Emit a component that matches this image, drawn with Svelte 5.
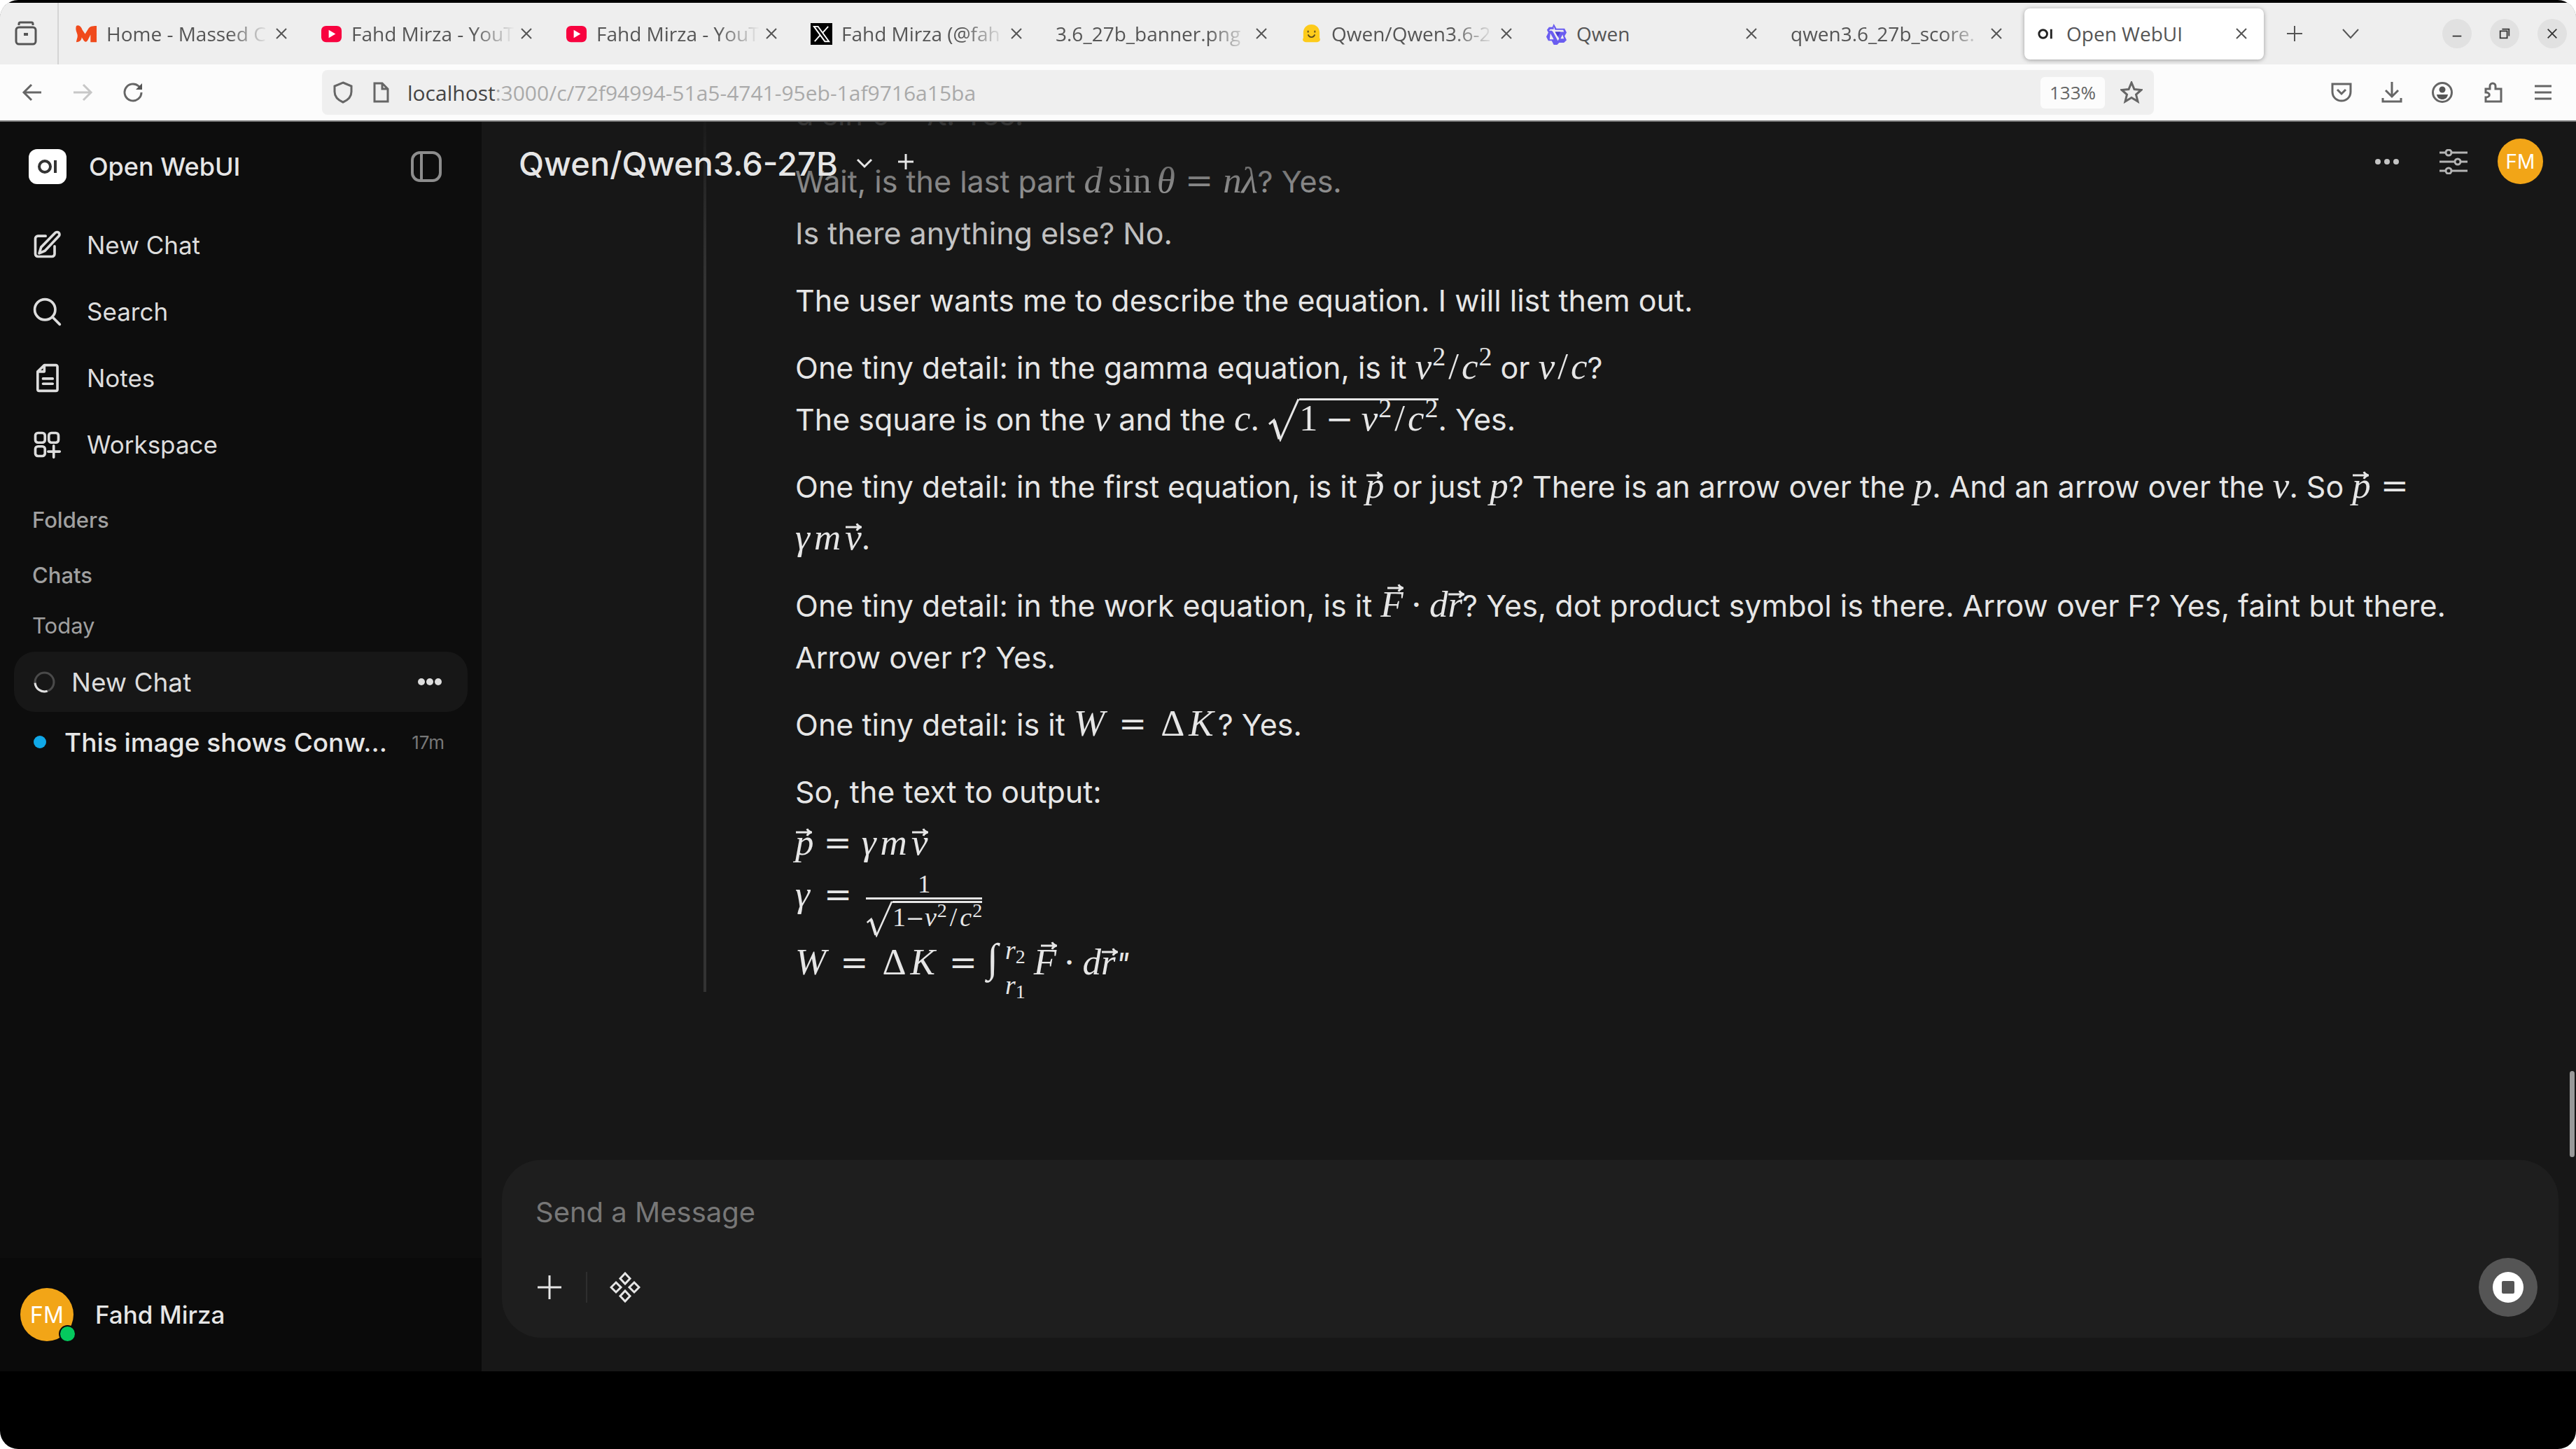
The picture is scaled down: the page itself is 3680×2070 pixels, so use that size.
<script lang="ts">
  type Tab = { title: string; icon: string; active?: boolean };

  const tabs: Tab[] = [
    { title: 'Home - Massed C', icon: 'massed' },
    { title: 'Fahd Mirza - YouT', icon: 'youtube' },
    { title: 'Fahd Mirza - YouT', icon: 'youtube' },
    { title: 'Fahd Mirza (@fah', icon: 'x' },
    { title: '3.6_27b_banner.png', icon: '' },
    { title: 'Qwen/Qwen3.6-2', icon: 'hugging' },
    { title: 'Qwen', icon: 'qwen' },
    { title: 'qwen3.6_27b_score.', icon: '' },
    { title: 'Open WebUI', icon: 'oi', active: true },
  ];

  let message = $state('');
</script>

{#snippet favicon(name: string)}
  {#if name === 'massed'}
    <svg class="favicon" viewBox="0 0 32 32"><path fill="#f04a1c" d="M1 4c4-2 7 1 9 6l4 6 5-8c2-3 5-4 12-4v24h-9V17l-4 8c-2 4-5 3-7-1l-2-3c0 5-4 7-8 7 1-6 3-8 1-13C0 10 0 7 1 4z" /></svg>
  {:else if name === 'youtube'}
    <svg class="favicon" viewBox="0 0 32 32"><rect x="1" y="4" width="30" height="24" rx="7" fill="#f8033f" /><path fill="#fff" d="M12 10l10 6-10 6z" /></svg>
  {:else if name === 'x'}
    <svg class="favicon" viewBox="0 0 32 32"><rect width="32" height="32" fill="#000" /><path fill="none" stroke="#fff" stroke-width="2" d="M5 5h6l16 22h-6zM26 5L17.500 14.500M14 18L6 27" /></svg>
  {:else if name === 'hugging'}
    <svg class="favicon" viewBox="0 0 32 32"><path fill="#fdcb1b" d="M16 2c7 0 12 5 12 12v8c2 3 0 6-4 6H8c-4 0-6-3-4-6v-8C4 7 9 2 16 2z" /><path fill="none" stroke="#5d4a1c" stroke-width="2" d="M11 11v3M21 11v3M11 17c2 5 8 5 10 0" /></svg>
  {:else if name === 'qwen'}
    <svg class="favicon" viewBox="0 0 32 32"><path fill="#6a5df0" d="M12 1l4 7h12l3 6-3 5 3 6-4 4h-7l-3 3h-5l-3-6H4l-3-6 3-6-2-4 3-4h5z" /><path fill="#eee" d="M12 5l2 5h12l1 3H14l6 10-2 3-7-13-2-2H5l2-2h5zM25 17l2 6h-5zM7 15l5 9H6z" /><path fill="#4b3fd0" d="M14 13h8l-4 7z" /></svg>
  {:else if name === 'oi'}
    <svg class="favicon" viewBox="0 0 32 32"><circle cx="11" cy="16" r="6" fill="none" stroke="#222" stroke-width="3" /><path stroke="#222" stroke-width="3" d="M23 9v14" /></svg>
  {/if}
{/snippet}

{#snippet cross()}
  <svg class="cross" viewBox="0 0 20 20"><path d="M3 3l14 14M17 3L3 17" /></svg>
{/snippet}

{#snippet vec(symbol: string)}<span class="vec">{symbol}<svg viewBox="0 0 24 12"><path d="M1 6h21M17 1c1 3 3 4 6 5-3 1-5 2-6 5" /></svg></span>{/snippet}

{#snippet root()}<span class="root"><svg class="radical" viewBox="0 0 45 62" preserveAspectRatio="none"><path d="M2 37l7-6 9 28L44 1" /><path d="M9 32l8 26" stroke-width="5" /></svg><span class="radicand"><b>1</b><b class="bin">−</b>v<sup>2</sup><b class="slash">/</b>c<sup>2</sup></span></span>{/snippet}

<div class="screen">
  <header class="browser">
    <div class="tabstrip">
      <button class="view" aria-label="Firefox View">
        <svg viewBox="0 0 32 36"><path d="M6 6V4a2 2 0 0 1 2-2h16a2 2 0 0 1 2 2v2" /><rect x="2" y="9" width="28" height="24" rx="4" /><path d="M13 19h6" stroke-width="4" /></svg>
      </button>
      <div class="tabs" role="tablist">
        {#each tabs as tab}
          <div class="tab" class:active={tab.active} role="tab" aria-selected={!!tab.active} tabindex="0">
            {@render favicon(tab.icon)}
            <span class="title" class:fade={!tab.active && tab.title !== 'Qwen'}>{tab.title}</span>
            <button aria-label="Close tab">{@render cross()}</button>
          </div>
        {/each}
      </div>
      <button class="strip-btn" aria-label="New tab"><svg viewBox="0 0 24 24"><path d="M12 1v22M1 12h22" /></svg></button>
      <button class="strip-btn" aria-label="List all tabs"><svg viewBox="0 0 24 24"><path d="M1 6l11 12L23 6" /></svg></button>
      <div class="window-btns">
        <button aria-label="Minimize"><svg viewBox="0 0 20 20"><path d="M3 14h14" /></svg></button>
        <button aria-label="Restore"><svg viewBox="0 0 20 20"><path d="M3 6h11v11H3zM6 3h11v11" /></svg></button>
        <button aria-label="Close">{@render cross()}</button>
      </div>
    </div>

    <div class="toolbar">
      <div class="nav">
        <button aria-label="Back"><svg viewBox="0 0 32 32"><path d="M29 16H4M15 5L4 16l11 11" /></svg></button>
        <button aria-label="Forward" disabled><svg viewBox="0 0 32 32"><path d="M3 16h25M17 5l11 11-11 11" /></svg></button>
        <button aria-label="Reload"><svg viewBox="0 0 32 32"><path d="M28 16a12 12 0 1 1-4-9l4 4" /><path d="M29 3v9h-9z" fill="#555" stroke="none" /></svg></button>
      </div>
      <div class="urlbar">
        <svg viewBox="0 0 32 32"><path d="M16 2l12 5v8c0 7-5 12-12 15C9 27 4 22 4 15V7z" /></svg>
        <svg viewBox="0 0 32 32"><path d="M7 3h11l8 8v18H7zM18 3v8h8" /></svg>
        <span class="url">localhost<span>:3000/c/72f94994-51a5-4741-95eb-1af9716a15ba</span></span>
        <button class="zoom">133%</button>
        <button class="star" aria-label="Bookmark this page"><svg viewBox="0 0 32 32"><path d="M16 2l4 9.500 10 1-7.500 6.500L25 29l-9-5.500L7 29l2.500-10L2 12.500l10-1z" /></svg></button>
      </div>
      <div class="extras">
        <button aria-label="Save to Pocket"><svg viewBox="0 0 32 32"><path d="M3 4h26v11c0 8-6 13-13 13S3 23 3 15zM10 12l6 6 6-6" /></svg></button>
        <button aria-label="Downloads"><svg viewBox="0 0 32 32"><path d="M16 1v20M7 13l9 9 9-9M3 24v5h26v-5" /></svg></button>
        <button aria-label="Account"><svg viewBox="0 0 32 32"><circle cx="16" cy="16" r="13.500" /><circle cx="16" cy="12" r="4.500" fill="#555" stroke="none" /><path d="M8 19h16c-1 5-4 7-8 7s-7-2-8-7z" fill="#555" stroke="none" /></svg></button>
        <button aria-label="Extensions"><svg viewBox="0 0 32 32"><path d="M6 11h6V7a4 4 0 0 1 8 0v4h8v18H6v-6c7 0 7-7 0-7z" /></svg></button>
        <button aria-label="Menu"><svg viewBox="0 0 32 32"><path d="M4 7h24M4 16h24M4 25h24" /></svg></button>
      </div>
    </div>
  </header>

  <div class="app">
    <aside>
      <div class="brand">
        <span class="logo"><svg viewBox="0 0 52 50"><circle cx="22" cy="25" r="8" /><path d="M37 16v18" /></svg></span>
        <span>Open WebUI</span>
        <button aria-label="Toggle sidebar">
          <svg viewBox="0 0 44 44"><rect x="2" y="2" width="40" height="40" rx="11" /><path d="M15 2v40" /></svg>
        </button>
      </div>

      <nav>
        <a href="#new">
          <svg viewBox="0 0 24 24"><path d="M11 5H5a2 2 0 0 0-2 2v12a2 2 0 0 0 2 2h11a2 2 0 0 0 2-2v-6" /><path d="M18.500 2.500a1.900 1.900 0 0 1 2.800 2.600L10.500 16.500 6 18.500l1.500-4.800z" /></svg>
          New Chat
        </a>
        <a href="#search">
          <svg viewBox="0 0 24 24"><circle cx="10.500" cy="10.500" r="8" /><path d="M16.500 16.500L22 22" /></svg>
          Search
        </a>
        <a href="#notes">
          <svg viewBox="0 0 24 24"><path d="M10 2h9a1.200 1.200 0 0 1 1.200 1.200v17.600A1.200 1.200 0 0 1 19 22H6a1.200 1.200 0 0 1-1.200-1.200V7zM10 2v5H4.800M9 12.500h7.500M9 16.500h7.500" /></svg>
          Notes
        </a>
        <a href="#workspace">
          <svg viewBox="0 0 24 24"><rect x="3" y="3" width="7.500" height="7.500" rx="2" /><rect x="13.500" y="3" width="7.500" height="7.500" rx="2" /><rect x="3" y="13.500" width="7.500" height="7.500" rx="2" /><path d="M17.300 13v9M13 17.500h9" /></svg>
          Workspace
        </a>
      </nav>

      <h2>Folders</h2>
      <h2>Chats</h2>
      <h3>Today</h3>

      <div class="chats">
        <div class="chat selected">
          <svg class="spinner" viewBox="0 0 30 30"><circle cx="15" cy="15" r="13" stroke="#4a4a4a" /><path d="M2 16a13 13 0 0 0 17 11.300" stroke="#e0e0e0" /></svg>
          <a href="#chat-1">New Chat</a>
          <button aria-label="Chat menu"><svg viewBox="0 0 36 12"><circle cx="6" cy="6" r="5" /><circle cx="18" cy="6" r="5" /><circle cx="30" cy="6" r="5" /></svg></button>
        </div>
        <div class="chat unread">
          <i></i>
          <a href="#chat-2">This image shows Conw...</a>
          <time>17m</time>
        </div>
      </div>

      <div class="user">
        <span class="avatar large">FM<i></i></span>
        <span>Fahd Mirza</span>
      </div>
    </aside>

    <main>
      <div class="topbar">
        <button class="model">
          Qwen/Qwen3.6-27B
          <svg viewBox="0 0 24 24"><path d="M2 7l10 10L22 7" /></svg>
        </button>
        <button class="add" aria-label="Add model"><svg viewBox="0 0 24 24"><path d="M12 1v22M1 12h22" /></svg></button>
        <button class="more" aria-label="More"><svg viewBox="0 0 36 10"><circle cx="5" cy="5" r="4" /><circle cx="18" cy="5" r="4" /><circle cx="31" cy="5" r="4" /></svg></button>
        <button class="controls" aria-label="Controls"><svg viewBox="0 0 40 36"><path d="M0 5h9M17 5h23M0 18h22M30 18h10M0 31h9M17 31h23" /><circle cx="13" cy="5" r="4" /><circle cx="26" cy="18" r="4" /><circle cx="13" cy="31" r="4" /></svg></button>
        <button class="avatar">FM</button>
      </div>

      <div class="messages">
        <blockquote>
          <p>d sin θ = λ: Yes.</p>
          <p>
            Wait, is the last part <span class="math">d<b class="fn">sin</b>θ<b class="rel">=</b>nλ</span>? Yes.<br />
            Is there anything else? No.
          </p>
          <p>The user wants me to describe the equation. I will list them out.</p>
          <p>
            One tiny detail: in the gamma equation, is it <span class="math">v<sup>2</sup><b class="slash">/</b>c<sup>2</sup></span> or <span class="math">v<b class="slash">/</b>c</span>?<br />
            The square is on the <span class="math">v</span> and the <span class="math">c</span>. <span class="math">{@render root()}</span>. Yes.
          </p>
          <p>
            One tiny detail: in the first equation, is it <span class="math">{@render vec('p')}</span> or just <span class="math">p</span>? There is an arrow over the <span class="math">p</span>. And an arrow over the <span class="math">v</span>. So <span class="math">{@render vec('p')}<b class="rel">=</b></span><br />
            <span class="math">γ<i>m</i>{@render vec('v')}</span>.
          </p>
          <p>
            One tiny detail: in the work equation, is it <span class="math cap">{@render vec('F')}<b class="bin">·</b></span><span class="math">d{@render vec('r')}</span>? Yes, dot product symbol is there. Arrow over F? Yes, faint but there.<br />
            Arrow over r? Yes.
          </p>
          <p>One tiny detail: is it <span class="math">W<b class="rel wide">=</b><b>Δ</b><i>K</i></span>? Yes.</p>
          <p>
            So, the text to output:<br />
            <span class="math">{@render vec('p')}<b class="rel">=</b>γ<i>m</i>{@render vec('v')}</span><br />
            <span class="math">γ<b class="rel wide">=</b><span class="frac"><b class="num">1</b><span class="den">{@render root()}</span></span></span><br />
            <span class="math">W<b class="rel wide">=</b><b>Δ</b><i>K</i><b class="rel">=</b><b class="int">∫</b><span class="limits"><span>r<sub>2</sub></span><span>r<sub>1</sub></span></span><span class="cap">{@render vec('F')}</span><b class="bin">·</b>d{@render vec('r')}</span><em>"</em>
          </p>
        </blockquote>
        <div class="thumb"></div>
      </div>

      <form class="composer">
        <input bind:value={message} placeholder="Send a Message" aria-label="Send a Message" />
        <div class="actions">
          <button type="button" aria-label="Attach"><svg viewBox="0 0 36 36"><path d="M18 1v34M1 18h34" /></svg></button>
          <hr />
          <button type="button" aria-label="Integrations"><svg viewBox="0 0 44 44"><path d="M22 2l7 7.500-7 7.500-7-7.500zM9 15l7 7-7 7-7-7zM35 15l7 7-7 7-7-7zM22 27l7 7.500-7 7.500-7-7.500z" /></svg></button>
          <button type="button" class="stop" aria-label="Stop"><svg viewBox="0 0 84 84"><circle cx="42" cy="42" r="22" fill="#fff" /><rect x="33" y="33" width="18" height="18" rx="2" fill="#555" /></svg></button>
        </div>
      </form>
    </main>
  </div>
</div>

<style>
  :global(body) { background: #fff; }
  * { box-sizing: border-box; }
  button { border: 0; background: none; padding: 0; color: inherit; font: inherit; display: grid; place-items: center; flex: none; }
  a { color: inherit; text-decoration: none; }
  svg { fill: none; stroke: currentColor; flex: none; display: block; }

  .screen {
    height: 100vh;
    display: flex;
    flex-direction: column;
    padding: 4px 0 111px;
    border-radius: 26px;
    overflow: hidden;
    background: #000;
    color: #e6e6e6;
    font-family: Inter, sans-serif;
  }

  /* browser chrome */
  .browser { flex: none; background: #fcfcfc; color: #555; font-family: "Open Sans", sans-serif; font-size: 28px; border-bottom: 2px solid #777; }
  .tabstrip { height: 88px; background: #eee; display: flex; align-items: center; padding-right: 13px; }
  .view { width: 84px; height: 88px; padding-right: 8px; border-right: 2px solid #d4d4d4; }
  .view svg { width: 32px; stroke-width: 3; }
  .tabs { flex: 0 1 3154px; display: flex; min-width: 0; padding-left: 4px; }
  .tab { flex: 0 1 342px; min-width: 0; height: 73px; margin: 0 4px; padding: 0 20px 0 16px; display: flex; align-items: center; gap: 13px; border-radius: 8px; }
  .tab.active { background: #fff; box-shadow: 0 1px 6px rgb(0 0 0 / 35%); }
  .favicon { width: 31px; height: 31px; stroke: none; }
  .title { flex: 1; overflow: hidden; white-space: nowrap; }
  .fade { mask-image: linear-gradient(to left, transparent, #000 60px); }
  .cross { width: 20px; height: 20px; stroke-width: 2; }
  .tab button { width: 24px; height: 24px; margin-left: -8px; }
  .strip-btn { width: 80px; height: 80px; }
  .strip-btn svg { width: 24px; stroke-width: 2; }
  .window-btns { display: flex; gap: 26px; margin-left: auto; }
  .window-btns button { width: 42px; height: 42px; border-radius: 50%; background: #e1e1e1; color: #333; }
  .window-btns svg { width: 18px; height: 18px; stroke-width: 2; }
  .toolbar { height: 80px; display: flex; align-items: center; }
  .toolbar svg { width: 32px; height: 32px; stroke-width: 3; color: #666; }
  .nav { display: flex; gap: 40px; padding-left: 30px; width: 460px; }
  .nav button:disabled { opacity: 0.35; }
  .urlbar { flex: 1; height: 64px; background: #efefef; border-radius: 8px; display: flex; align-items: center; gap: 22px; padding: 0 16px 0 14px; }
  .url { flex: 1; color: #444; font-size: 30px; }
  .url span { color: #aaa; }
  .zoom { width: 92px; height: 45px; background: #fcfcfc; border-radius: 6px; font-size: 26px; color: #666; }
  .extras { width: 603px; display: flex; justify-content: flex-end; gap: 40px; padding-right: 31px; }

  /* sidebar */
  .app { flex: 1; display: flex; min-height: 0; }
  aside { width: 688px; flex: none; background: #0d0d0d; display: flex; flex-direction: column; }
  .brand { height: 128px; padding: 0 57px 0 41px; display: flex; align-items: center; font-size: 36px; font-weight: 500; }
  .logo { width: 54px; height: 50px; border-radius: 12px; background: #fff; color: #333; margin-right: 32px; }
  .logo svg { width: 54px; height: 50px; stroke-width: 4; }
  .brand button { margin-left: auto; color: #8d8d8d; }
  .brand button svg { width: 44px; stroke-width: 4; }
  nav { padding-left: 45px; font-size: 35px; color: #ddd; }
  nav a { height: 95px; display: flex; align-items: center; gap: 35px; }
  nav svg { width: 44px; height: 44px; stroke-width: 2; stroke-linecap: round; stroke-linejoin: round; }
  h2, h3 { margin: 0; padding-left: 46px; font-size: 31px; font-weight: 500; line-height: 79px; color: #a0a0a0; }
  h2:first-of-type { margin-top: 21px; }
  h3 { line-height: 66px; font-weight: 400; }
  .chats { padding: 4px 20px; }
  .chat { height: 86px; border-radius: 30px; padding: 0 33px 0 28px; display: flex; align-items: center; font-size: 37px; }
  .chat a { flex: 1; white-space: nowrap; }
  .selected { background: #171717; color: #ddd; padding-right: 36px; }
  .spinner { width: 31px; stroke-width: 3; margin-right: 23px; }
  .chat button svg { width: 36px; fill: currentColor; stroke: none; }
  .unread { font-weight: 500; }
  .unread i { width: 18px; height: 18px; border-radius: 50%; background: #10a8e8; margin-right: 26px; }
  .unread time { font-size: 26px; font-weight: 400; color: #777; }
  .user { margin-top: auto; height: 162px; background: #0a0a0a; padding-left: 29px; display: flex; align-items: center; gap: 31px; font-size: 35px; font-weight: 500; }
  .avatar { width: 65px; height: 65px; border-radius: 50%; background: #f2a517; color: #fff; display: grid; place-items: center; font-size: 28px; font-weight: 400; }
  .large { position: relative; width: 76px; height: 76px; font-size: 32px; }
  .large i { position: absolute; right: -4px; bottom: -2px; width: 25px; height: 25px; border-radius: 50%; background: #05c95e; border: 2px solid #0a0a0a; }

  /* chat */
  main { flex: 1; min-width: 0; background: #171717; position: relative; display: flex; flex-direction: column; }
  .topbar {
    position: absolute;
    inset: 0 0 auto;
    height: 230px;
    z-index: 1;
    padding: 24px 47px 0 53px;
    display: flex;
    align-items: flex-start;
    background: linear-gradient(rgb(23 23 23 / 88%), rgb(23 23 23 / 48%) 37%, rgb(23 23 23 / 18%) 70%, transparent);
  }
  .topbar > button { height: 65px; }
  .topbar .model { display: flex; align-items: center; gap: 26px; height: 70px; font-size: 47px; font-weight: 500; }
  .model svg, .add svg { width: 24px; stroke-width: 3; }
  .add { margin-left: 35px; }
  .more { margin-left: auto; color: #c4c4c4; }
  .more svg { width: 36px; fill: currentColor; stroke: none; }
  .controls { margin: 0 43px 0 57px; color: #b4b4b4; }
  .controls svg { width: 40px; stroke-width: 3; }

  .messages { flex: 1; min-height: 0; overflow: hidden; display: flex; flex-direction: column; justify-content: flex-end; padding: 0 50px 240px 317px; position: relative; }
  .thumb { position: absolute; right: 2px; bottom: 4px; width: 7px; height: 123px; border-radius: 4px; background: #999; }
  blockquote { margin: 0; padding-left: 127px; border-left: 4px solid #333; font-size: 43px; line-height: 74px; }
  p { margin: 0 0 22px; }
  p:last-child { margin: 0; }

  /* formulas */
  .math { font-family: "Liberation Serif", serif; font-style: italic; font-size: 53px; line-height: 0; white-space: nowrap; }
  .math b { font-style: normal; font-weight: 400; line-height: 0; }
  .math i { margin: 0 6px; }
  .math sup { font-size: 38px; line-height: 0; vertical-align: 19px; font-style: normal; margin-left: 1px; }
  .math .fn { margin: 0 8px; }
  .math .slash { margin: 0 4px; }
  .math .rel, .math .bin { font-family: "DejaVu Serif", serif; font-size: 48px; margin: 0 14px; }
  .math .wide { margin: 0 20px; }
  .math .bin { margin: 0 11px; }
  .vec { position: relative; display: inline-block; }
  .vec svg { position: absolute; left: 0; bottom: 8px; width: 24px; height: 12px; stroke-width: 3; }
  .cap .vec svg { left: 9px; bottom: 17px; }
  .root { display: inline-flex; line-height: 0; vertical-align: -16px; }
  .radical { width: 45px; height: 62px; stroke-width: 3; }
  .radicand { height: 62px; line-height: 50px; border-top: 3px solid; }
  .frac { display: inline-flex; flex-direction: column; vertical-align: 20px; }
  .math .num { font-size: 36px; line-height: 38px; text-align: center; border-bottom: 3px solid; }
  .den { display: flex; padding-top: 2px; font-size: 38px; }
  .den .radical { width: 38px; height: 52px; }
  .den .radicand { height: 52px; line-height: 40px; }
  .den sup { font-size: 28px; vertical-align: 13px; }
  .math .den .bin { font-size: 32px; margin: 0; }
  .math .int { font-size: 58px; vertical-align: 4px; margin-right: 10px; }
  .limits { display: inline-flex; flex-direction: column; gap: 40px; font-size: 38px; vertical-align: 22px; margin-right: 12px; }
  .limits sub { font-size: 28px; font-style: normal; line-height: 0; vertical-align: -6px; }

  .composer { flex: none; margin: 0 25px 48px 29px; height: 254px; border-radius: 56px; background: #1e1e1e; padding: 42px 30px 30px 48px; display: flex; flex-direction: column; justify-content: space-between; }
  input { border: 0; padding: 0; background: none; color: inherit; font: 40px/66px Inter, sans-serif; outline: 0; }
  input::placeholder { color: #777; opacity: 1; }
  .actions { display: flex; align-items: center; padding-left: 2px; }
  .actions svg { width: 36px; stroke-width: 3; }
  .actions hr { width: 2px; height: 44px; margin: 0 32px 0 34px; border: 0; background: #2e2e2e; }
  .actions button:nth-of-type(2) svg { width: 44px; }
  .actions .stop { margin-left: auto; width: 84px; height: 84px; border-radius: 50%; background: #555; }
  .actions .stop svg { width: 84px; stroke: none; }
</style>
